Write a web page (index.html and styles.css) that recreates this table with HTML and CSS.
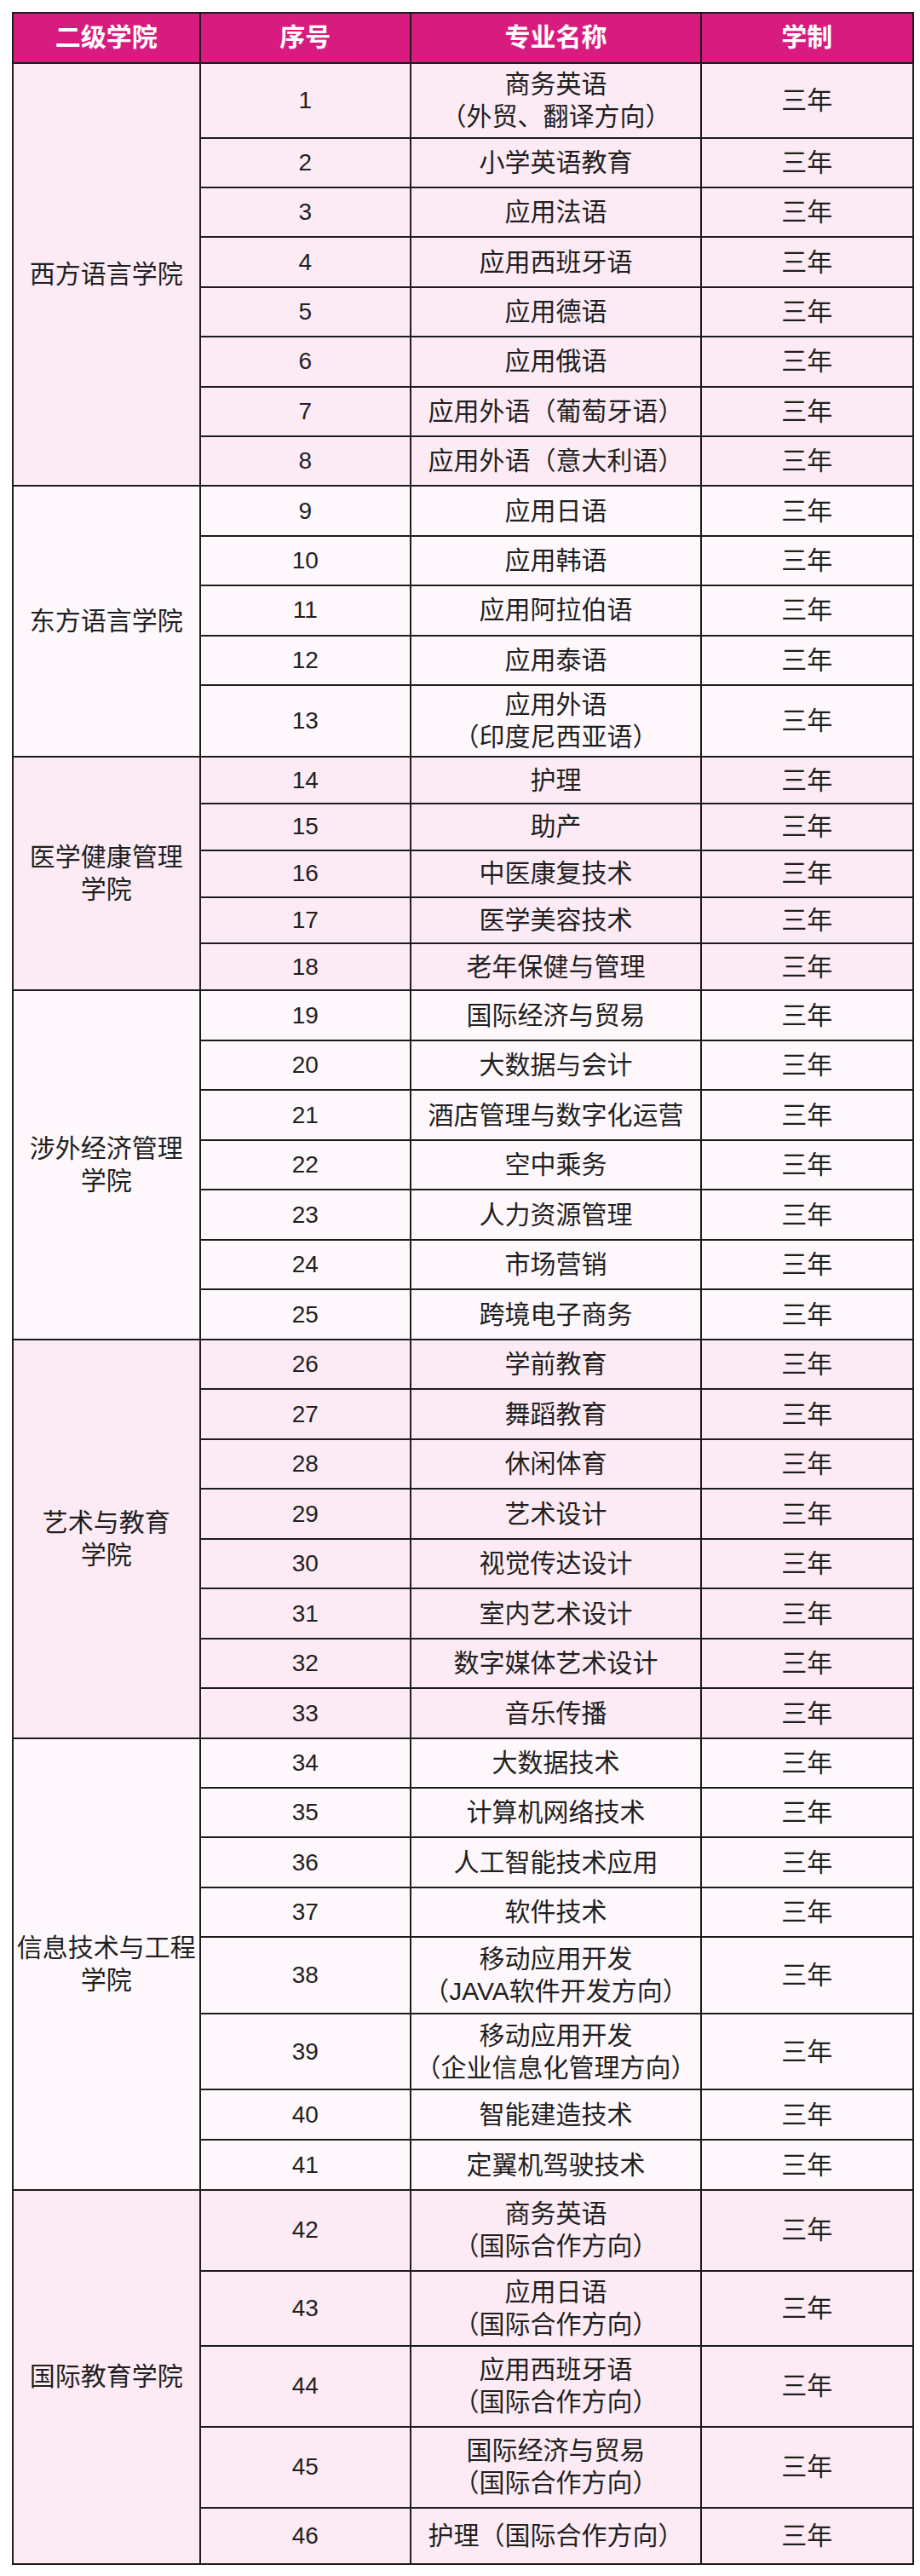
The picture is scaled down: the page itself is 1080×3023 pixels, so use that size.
FILE: index.html
```html
<!DOCTYPE html>
<html lang="zh-CN">
<head>
<meta charset="utf-8">
<title>专业设置</title>
<link rel="stylesheet" href="styles.css">
</head>
<body>
<div class="page">
<table class="majors">
  <colgroup>
    <col class="c-school"><col class="c-num"><col class="c-name"><col class="c-len">
  </colgroup>
  <thead>
    <tr class="h587"><th>二级学院</th><th>序号</th><th>专业名称</th><th>学制</th></tr>
  </thead>
  <tbody class="pink">
    <tr class="h88"><td class="school" rowspan="8">西方语言学院</td><td class="num">1</td><td>商务英语<br>（外贸、翻译方向）</td><td>三年</td></tr>
    <tr class="h584"><td class="num">2</td><td>小学英语教育</td><td>三年</td></tr>
    <tr class="h584"><td class="num">3</td><td>应用法语</td><td>三年</td></tr>
    <tr class="h584"><td class="num">4</td><td>应用西班牙语</td><td>三年</td></tr>
    <tr class="h584"><td class="num">5</td><td>应用德语</td><td>三年</td></tr>
    <tr class="h584"><td class="num">6</td><td>应用俄语</td><td>三年</td></tr>
    <tr class="h584"><td class="num">7</td><td>应用外语（葡萄牙语）</td><td>三年</td></tr>
    <tr class="h584"><td class="num">8</td><td>应用外语（意大利语）</td><td>三年</td></tr>
  </tbody>
  <tbody class="light">
    <tr class="h584"><td class="school" rowspan="5">东方语言学院</td><td class="num">9</td><td>应用日语</td><td>三年</td></tr>
    <tr class="h584"><td class="num">10</td><td>应用韩语</td><td>三年</td></tr>
    <tr class="h584"><td class="num">11</td><td>应用阿拉伯语</td><td>三年</td></tr>
    <tr class="h584"><td class="num">12</td><td>应用泰语</td><td>三年</td></tr>
    <tr class="h843"><td class="num">13</td><td>应用外语<br>（印度尼西亚语）</td><td>三年</td></tr>
  </tbody>
  <tbody class="pink">
    <tr class="h548"><td class="school" rowspan="5">医学健康管理<br>学院</td><td class="num">14</td><td>护理</td><td>三年</td></tr>
    <tr class="h548"><td class="num">15</td><td>助产</td><td>三年</td></tr>
    <tr class="h548"><td class="num">16</td><td>中医康复技术</td><td>三年</td></tr>
    <tr class="h548"><td class="num">17</td><td>医学美容技术</td><td>三年</td></tr>
    <tr class="h548"><td class="num">18</td><td>老年保健与管理</td><td>三年</td></tr>
  </tbody>
  <tbody class="light">
    <tr class="h585"><td class="school" rowspan="7">涉外经济管理<br>学院</td><td class="num">19</td><td>国际经济与贸易</td><td>三年</td></tr>
    <tr class="h585"><td class="num">20</td><td>大数据与会计</td><td>三年</td></tr>
    <tr class="h585"><td class="num">21</td><td>酒店管理与数字化运营</td><td>三年</td></tr>
    <tr class="h585"><td class="num">22</td><td>空中乘务</td><td>三年</td></tr>
    <tr class="h585"><td class="num">23</td><td>人力资源管理</td><td>三年</td></tr>
    <tr class="h585"><td class="num">24</td><td>市场营销</td><td>三年</td></tr>
    <tr class="h585"><td class="num">25</td><td>跨境电子商务</td><td>三年</td></tr>
  </tbody>
  <tbody class="pink">
    <tr class="h585"><td class="school" rowspan="8">艺术与教育<br>学院</td><td class="num">26</td><td>学前教育</td><td>三年</td></tr>
    <tr class="h585"><td class="num">27</td><td>舞蹈教育</td><td>三年</td></tr>
    <tr class="h585"><td class="num">28</td><td>休闲体育</td><td>三年</td></tr>
    <tr class="h585"><td class="num">29</td><td>艺术设计</td><td>三年</td></tr>
    <tr class="h585"><td class="num">30</td><td>视觉传达设计</td><td>三年</td></tr>
    <tr class="h585"><td class="num">31</td><td>室内艺术设计</td><td>三年</td></tr>
    <tr class="h585"><td class="num">32</td><td>数字媒体艺术设计</td><td>三年</td></tr>
    <tr class="h585"><td class="num">33</td><td>音乐传播</td><td>三年</td></tr>
  </tbody>
  <tbody class="light">
    <tr class="h5835"><td class="school" rowspan="8">信息技术与工程<br>学院</td><td class="num">34</td><td>大数据技术</td><td>三年</td></tr>
    <tr class="h5835"><td class="num">35</td><td>计算机网络技术</td><td>三年</td></tr>
    <tr class="h5835"><td class="num">36</td><td>人工智能技术应用</td><td>三年</td></tr>
    <tr class="h5835"><td class="num">37</td><td>软件技术</td><td>三年</td></tr>
    <tr class="h896"><td class="num">38</td><td>移动应用开发<br>（JAVA软件开发方向）</td><td>三年</td></tr>
    <tr class="h896"><td class="num">39</td><td>移动应用开发<br>（企业信息化管理方向）</td><td>三年</td></tr>
    <tr class="h588"><td class="num">40</td><td>智能建造技术</td><td>三年</td></tr>
    <tr class="h588"><td class="num">41</td><td>定翼机驾驶技术</td><td>三年</td></tr>
  </tbody>
  <tbody class="pink">
    <tr class="h947"><td class="school" rowspan="5">国际教育学院</td><td class="num">42</td><td>商务英语<br>（国际合作方向）</td><td>三年</td></tr>
    <tr class="h88"><td class="num">43</td><td>应用日语<br>（国际合作方向）</td><td>三年</td></tr>
    <tr class="h95"><td class="num">44</td><td>应用西班牙语<br>（国际合作方向）</td><td>三年</td></tr>
    <tr class="h95"><td class="num">45</td><td>国际经济与贸易<br>（国际合作方向）</td><td>三年</td></tr>
    <tr class="h66"><td class="num">46</td><td>护理（国际合作方向）</td><td>三年</td></tr>
  </tbody>
</table>
</div>
</body>
</html>
```
FILE: styles.css
```css
html, body {
  margin: 0;
  padding: 0;
  background: #ffffff;
}

.page {
  padding: 14px 0 0 14px;
}

.majors {
  border-collapse: collapse;
  table-layout: fixed;
  width: 1056.5px;
  font-family: "Liberation Sans", "Noto Sans CJK SC", sans-serif;
  font-size: 30px;
  line-height: 38px;
  color: #1f1f1f;
}

.c-school { width: 219.5px; }
.c-num { width: 247.5px; }
.c-name { width: 341px; }
.c-len { width: 248.5px; }

.majors th,
.majors td {
  border: 2px solid #1c1c1c;
  padding: 0;
  text-align: center;
  vertical-align: middle;
}

.majors th {
  background: #d81b7e;
  color: #ffffff;
  font-weight: 700;
}

.majors td.num {
  font-size: 28px;
}

.pink td { background: #fcebf4; }
.light td { background: #fef8fc; }

.h587 { height: 58.7px; }
.h88 { height: 88px; }
.h584 { height: 58.4px; }
.h843 { height: 84.3px; }
.h548 { height: 54.8px; }
.h585 { height: 58.5px; }
.h5835 { height: 58.35px; }
.h896 { height: 89.6px; }
.h588 { height: 58.8px; }
.h947 { height: 94.7px; }
.h95 { height: 95px; }
.h66 { height: 66px; }
```
